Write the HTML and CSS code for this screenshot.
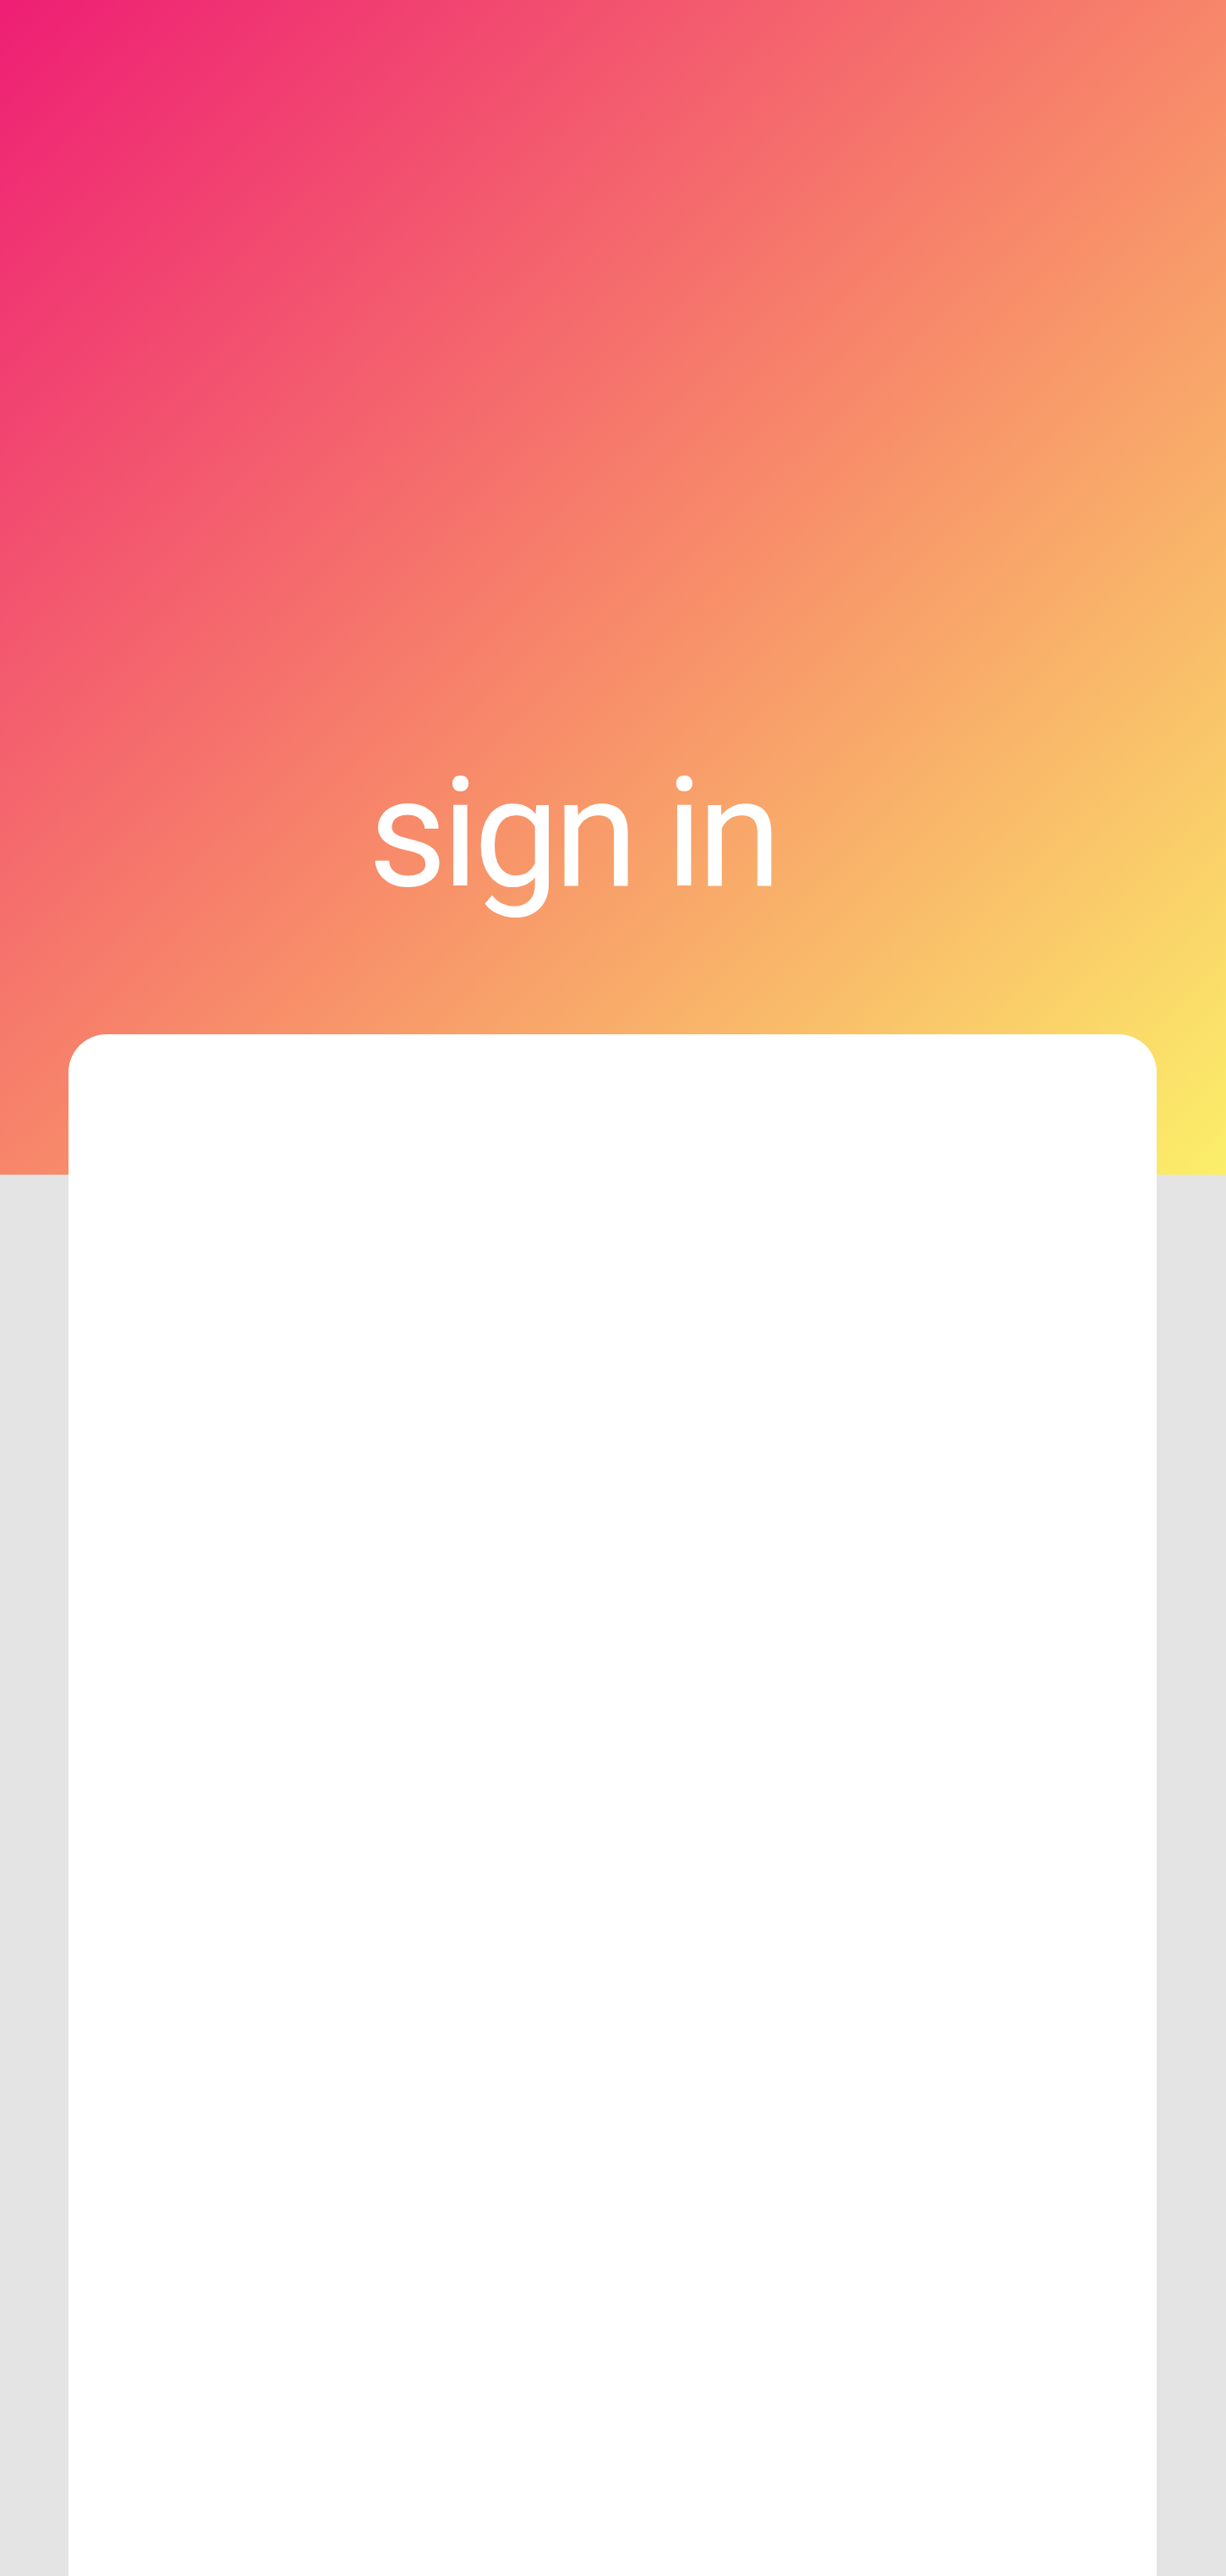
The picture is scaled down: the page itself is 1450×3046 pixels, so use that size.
FILE: index.html
```html
<!DOCTYPE html>
<html lang="en">
<head>
<meta charset="utf-8">
<title>sign in</title>
<link rel="stylesheet" href="styles.css">
</head>
<body>
<div class="page">
  <header class="hero">
    <h1 class="title">sign in</h1>
  </header>
  <main class="card"></main>
</div>
</body>
</html>
```
FILE: styles.css
```css
html, body {
  margin: 0;
  padding: 0;
}
body {
  background: #e4e4e4;
  font-family: "Roboto", "Noto Sans", sans-serif;
}
.page {
  display: flex;
  flex-direction: column;
  min-height: 3046px;
}
.hero {
  height: 1389px;
  background: linear-gradient(to bottom right, #ee1e74 0%, #f7866a 50%, #fbef69 100%);
  display: flex;
  justify-content: center;
  box-sizing: border-box;
  padding-top: 896px;
  padding-right: 96px;
}
.title {
  margin: 0;
  color: #ffffff;
  font-weight: 400;
  font-size: 180px;
  line-height: 1;
  letter-spacing: -6px;
}
.card {
  margin: -166px 82px 0 81px;
  flex: 1;
  background: #ffffff;
  border-radius: 45px 45px 0 0;
}
```
